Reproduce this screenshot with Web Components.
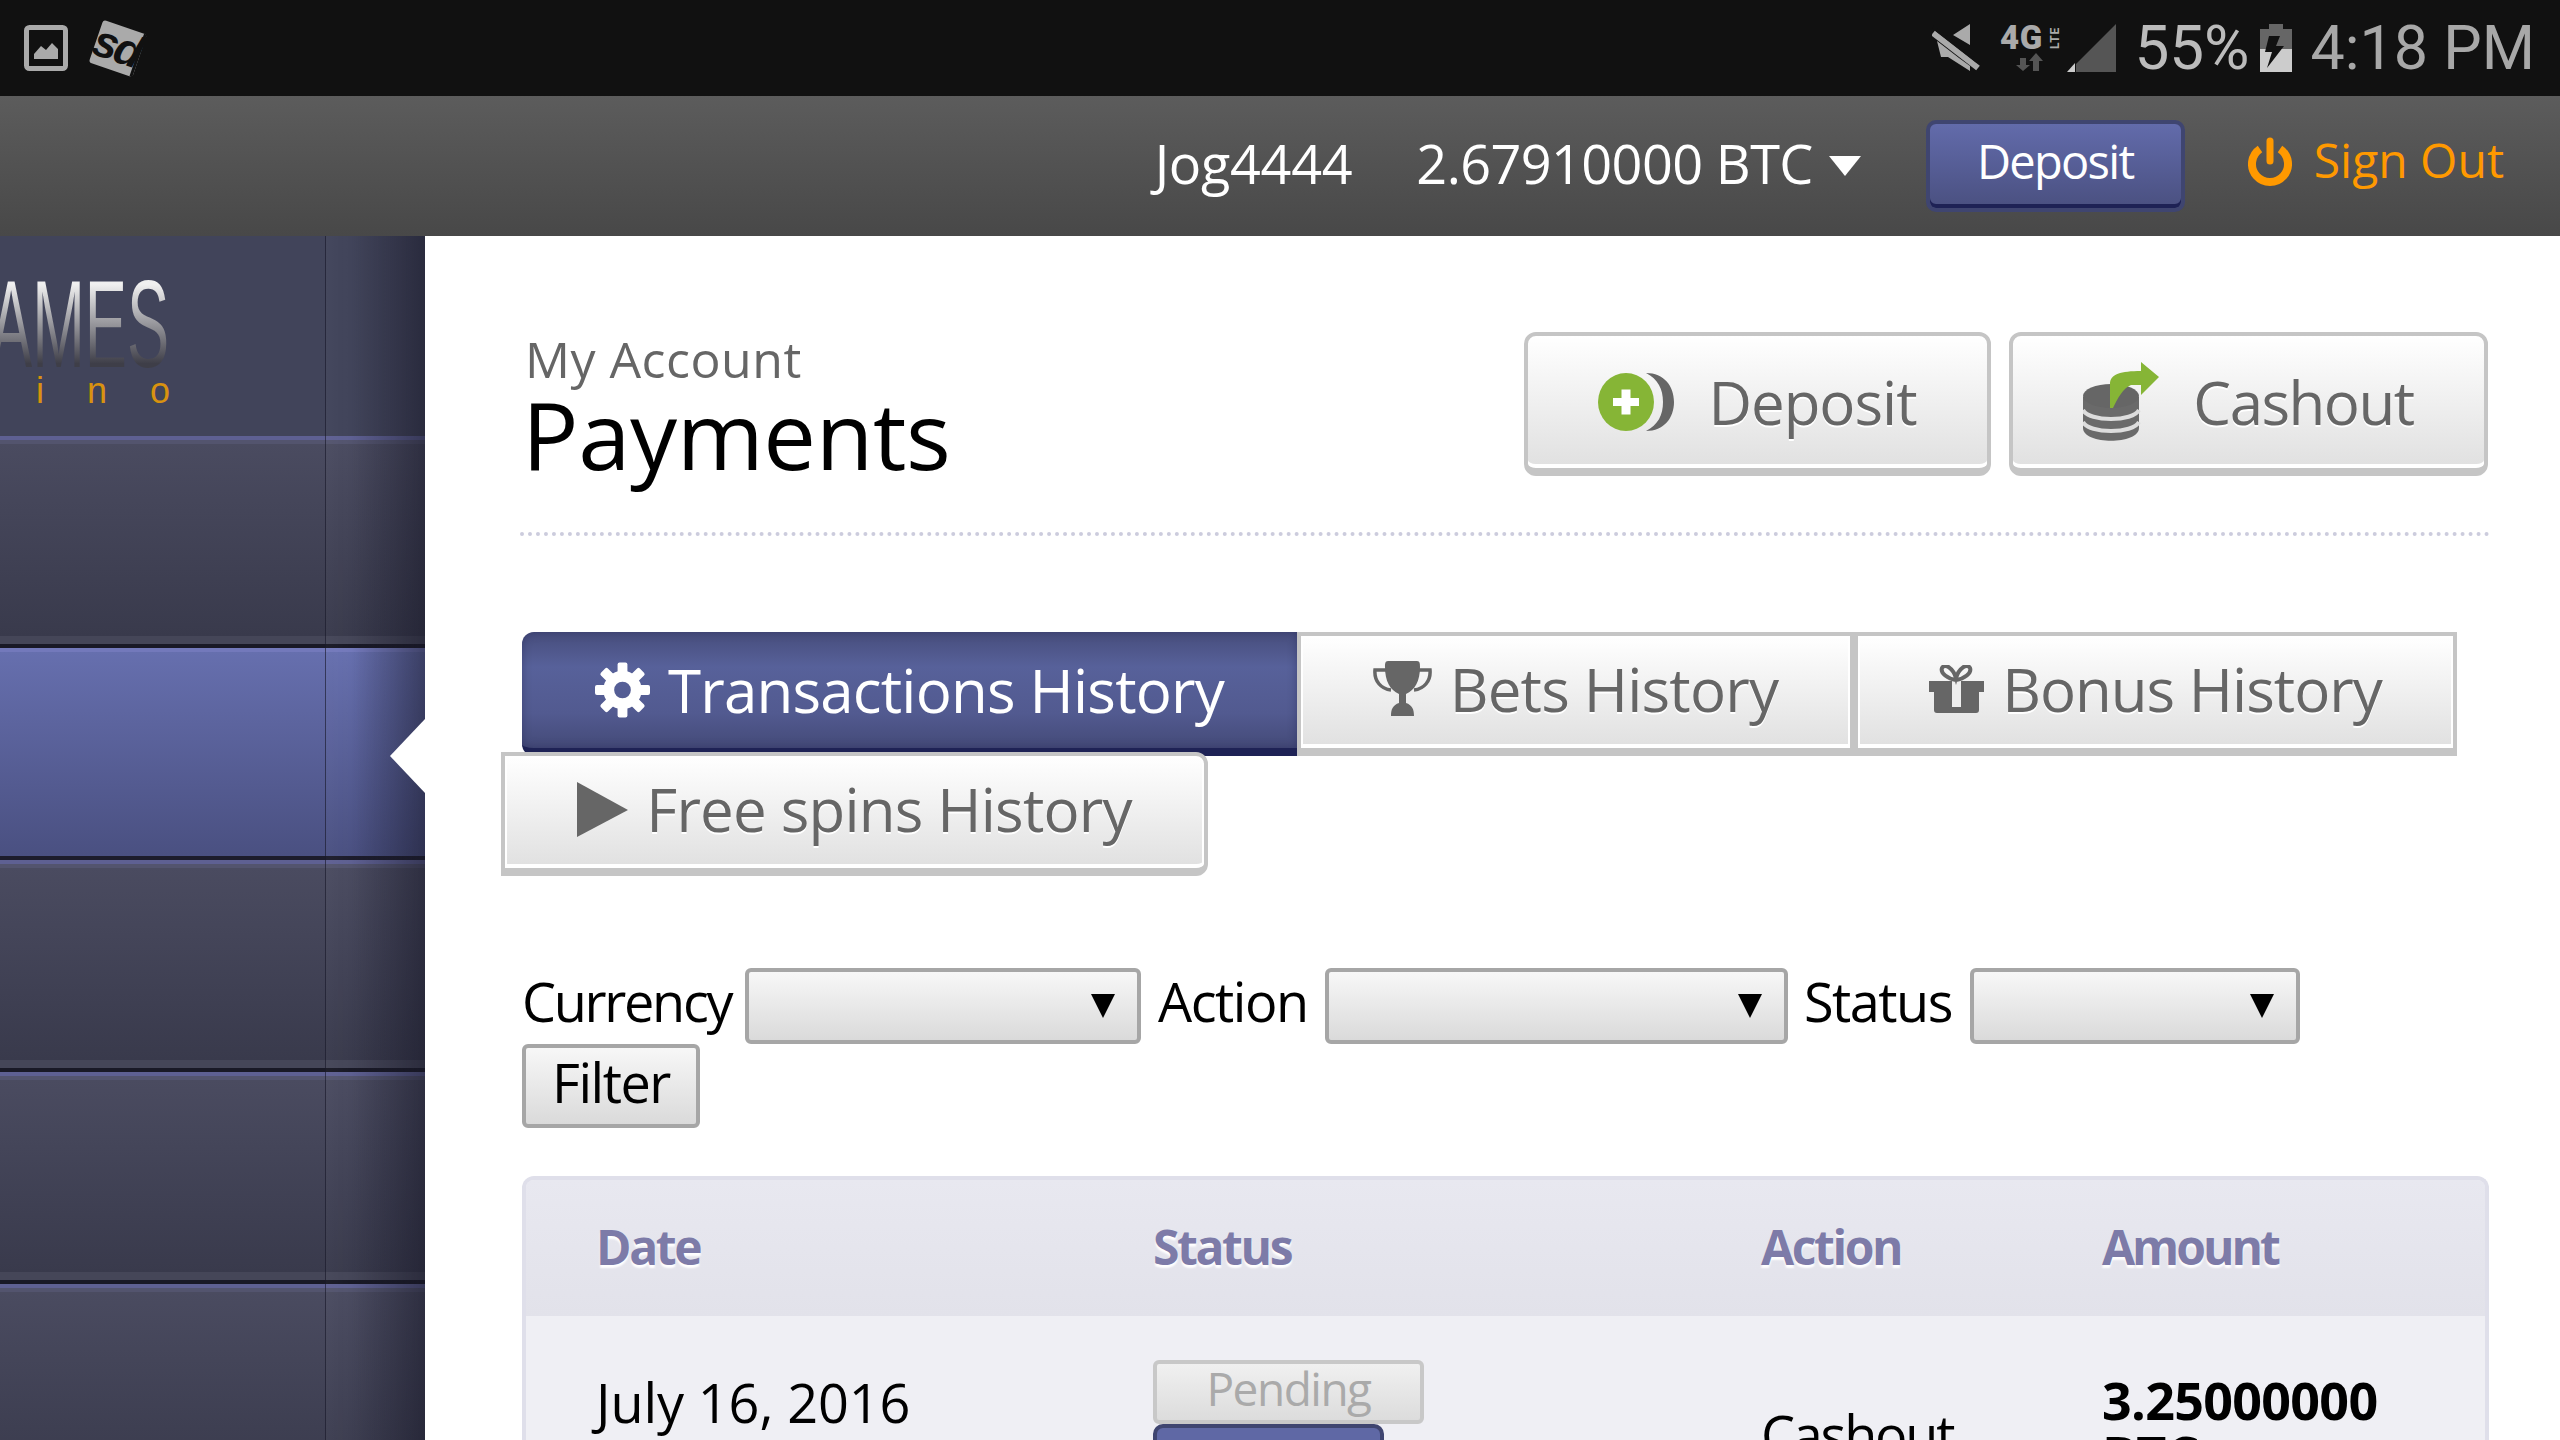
<!DOCTYPE html>
<html>
<head>
<meta charset="utf-8">
<title>Payments</title>
<style>
	html, body { margin: 0; height: 1440px; overflow: hidden; background: #fff; }
	body { font-family: "Open Sans", sans-serif; color: #000; }
	svg { display: block; }
</style>
</head>
<body>

<status-bar>
	<svg slot="left" width="44" height="46" viewBox="0 0 44 46">
		<rect x="2.5" y="2.5" width="39" height="41" rx="3" fill="none" stroke="#aaa" stroke-width="5"/>
		<path d="M10 34 V29 L17 21 L22 25 L28 18 L34 24 V34 Z" fill="#aaa"/>
	</svg>
	<svg slot="left" width="58" height="58" viewBox="0 0 58 58" overflow="visible">
		<g transform="rotate(19 29 29)">
			<rect x="6" y="7" width="46" height="45" rx="3" fill="#aaa"/>
			<rect x="49" y="7" width="3" height="45" fill="#111"/>
			<text x="4" y="43" font-family="Liberation Sans" font-weight="700" font-style="italic" font-size="45" letter-spacing="-3" fill="#111">sd</text>
		</g>
	</svg>

	<svg slot="right" width="48" height="48" viewBox="0 0 48 48">
		<path d="M38 0 V21 L21 11 Z M5 17 L27 34 L38 42 V47 L16 33 H9 Z" fill="#aaa"/>
		<path d="M1 9 L46 44" stroke="#aaa" stroke-width="6"/>
		<path d="M1 3 L46 38" stroke="#111" stroke-width="3"/>
	</svg>
	<svg slot="right" width="60" height="48" viewBox="0 0 60 48" overflow="visible" style="margin-left:20px">
		<text x="0" y="25" font-family="Roboto" font-weight="900" font-size="33" letter-spacing=".5" fill="#aaa">4G</text>
		<text transform="translate(59 25) rotate(-90)" font-family="Roboto" font-weight="700" font-size="12" letter-spacing="1" fill="#aaa">LTE</text>
		<path d="M14 36 H20 V43 H24 L17 49 L10 43 H14 Z" fill="#555" transform="translate(6 -2)"/>
		<path d="M33 47 H39 V37 H43 L36 29 L29 37 H33 Z" fill="#555"/>
	</svg>
	<svg slot="right" width="49" height="48" viewBox="0 0 49 48" style="margin-left:7px">
		<path d="M49 0 V48 H9 V40 Z" fill="#555"/>
		<path d="M0 48 L8 39 V48 Z" fill="#ccc"/>
	</svg>
	<span slot="right" class="pct">55%</span>
	<svg slot="right" width="32" height="48" viewBox="0 0 32 48" style="margin-left:10px">
		<path d="M9 0 H23 V5 H32 V25 H0 V5 H9 Z" fill="#666"/>
		<rect x="0" y="25" width="32" height="23" fill="#ccc"/>
		<path d="M20 12 H9 L5 28 H12 L7 44 L24 22 H16 Z" fill="#111"/>
	</svg>
	<span slot="right" class="time">4:18 PM</span>
</status-bar>

<top-bar></top-bar>

<div class="layout" style="display:flex;height:1204px;overflow:hidden">
	<side-nav></side-nav>
	<main-pane>
		<page-head>
			<action-button width="467">
				<svg slot="icon" width="76" height="58" viewBox="0 0 76 58">
					<path d="M48 0 C66 0 76 13 76 29 C76 45 66 58 48 58 C60 52 65 42 65 29 C65 16 60 6 48 0 Z" fill="#666"/>
					<ellipse cx="28" cy="29" rx="28" ry="29" fill="#86b536"/>
					<path d="M23.5 16.5 H32.5 V25 H41 V33 H32.5 V41.5 H23.5 V33 H15 V25 H23.5 Z" fill="#fff"/>
				</svg>
				Deposit
			</action-button>
			<action-button width="479" style="letter-spacing:-1.5px">
				<svg slot="icon" width="76" height="80" viewBox="0 0 76 80">
					<path d="M0 35 V66 C0 83 56 83 56 66 V35 Z" fill="#6a6a6a"/>
					<path d="M0 48 C6 60 50 60 56 48 M0 60 C6 72 50 72 56 60" fill="none" stroke="#ddd" stroke-width="4"/>
					<ellipse cx="28" cy="34" rx="28" ry="12" fill="#666"/>
					<path d="M58 0 L76 15 L58 33 V23 H48 C40 26 35 36 30 46 H27 V22 C27 12 38 9 58 9 Z" fill="#86b536"/>
				</svg>
				Cashout
			</action-button>
		</page-head>

		<tab-row>
			<tab-button active first width="775">
				<svg slot="icon" width="55" height="56" viewBox="-28 -28 56 56" fill="#fff">
					<circle r="14" fill="none" stroke="#fff" stroke-width="11"/>
					<rect x="-5" y="-28" width="10" height="12" rx="2"/>
					<rect x="-5" y="-28" width="10" height="12" rx="2" transform="rotate(45)"/>
					<rect x="-5" y="-28" width="10" height="12" rx="2" transform="rotate(90)"/>
					<rect x="-5" y="-28" width="10" height="12" rx="2" transform="rotate(135)"/>
					<rect x="-5" y="-28" width="10" height="12" rx="2" transform="rotate(180)"/>
					<rect x="-5" y="-28" width="10" height="12" rx="2" transform="rotate(225)"/>
					<rect x="-5" y="-28" width="10" height="12" rx="2" transform="rotate(270)"/>
					<rect x="-5" y="-28" width="10" height="12" rx="2" transform="rotate(315)"/>
				</svg>
				Transactions History
			</tab-button>
			<tab-button width="557">
				<svg slot="icon" width="59" height="56" viewBox="0 0 59 56">
					<path d="M15 0 H44 C47 0 47 3 47 6 C47 20 42 29 33 33 V42 C39 44 41 48 41 55 H18 C18 48 20 44 26 42 V33 C17 29 12 20 12 6 C12 3 12 0 15 0 Z" fill="#666"/>
					<path d="M13 9 H2 C1 20 8 28 18 29 M46 9 H57 C58 20 51 28 41 29" fill="none" stroke="#666" stroke-width="3.5"/>
				</svg>
				Bets History
			</tab-button>
			<tab-button width="603" style="letter-spacing:-1px">
				<svg slot="icon" width="55" height="48" viewBox="0 0 55 48">
					<path d="M0 16 H55 V27 H50 V45 C50 47 49 48 47 48 H8 C6 48 5 47 5 45 V27 H0 Z" fill="#666"/>
					<rect x="23" y="16" width="9" height="26" fill="#eee"/>
					<path d="M27 15 C19 14 11 8 13 3 C16 -2 24 3 27 13 C30 3 38 -2 41 3 C43 8 35 14 27 15 Z" fill="none" stroke="#666" stroke-width="4"/>
				</svg>
				Bonus History
			</tab-button>
		</tab-row>
		<tab-row second>
			<tab-button last width="707">
				<svg slot="icon" width="51" height="55" viewBox="0 0 51 55"><path d="M0 0 L51 28 L0 55 Z" fill="#666"/></svg>
				Free spins History
			</tab-button>
		</tab-row>

		<filter-bar></filter-bar>
		<tx-table></tx-table>
	</main-pane>
</div>

<script>
class StatusBar extends HTMLElement {
	connectedCallback(){
		const shadow = this.attachShadow({ mode: 'open' })
		shadow.innerHTML = `
		<style>
			:host { display: flex; justify-content: space-between; height: 96px; background: #111; font-family: Roboto, sans-serif; }
			.left { display: flex; gap: 21px; padding-left: 24px; align-items: center; }
			.right { display: flex; align-items: center; padding-right: 25px; }
			::slotted(.pct) { color: #bbb; font-size: 62px; margin-left: 18px; line-height: 96px; }
			::slotted(.time) { color: #a8a8a8; font-size: 61px; margin-left: 19px; line-height: 96px; }
		</style>
		<div class="left"><slot name="left"></slot></div>
		<div class="right"><slot name="right"></slot></div>`
	}
}

class TopBar extends HTMLElement {
	connectedCallback(){
		const shadow = this.attachShadow({ mode: 'open' })
		shadow.innerHTML = `
		<style>
			:host { display: flex; justify-content: flex-end; align-items: center; height: 140px; padding-right: 56px; background: linear-gradient(#5c5c5c, #484848); color: #fff; }
			.name, .balance { font-size: 54px; padding-bottom: 6px; }
			.name { letter-spacing: -.3px; }
			.balance { margin-left: 64px; letter-spacing: -.6px; }
			.caret { width: 0; height: 0; border: 16px solid transparent; border-top: 20px solid #fff; border-bottom: 0; margin: 0 0 0 16px; }
			.deposit { box-sizing: border-box; width: 259px; height: 92px; margin-left: 65px; border: 4px solid #3f4570; border-radius: 10px; background: linear-gradient(#626bab, #4a5080); box-shadow: inset 0 -4px 0 #1e2255; display: flex; align-items: center; justify-content: center; font-size: 47px; letter-spacing: -1.7px; padding-bottom: 10px; }
			.out { display: flex; align-items: center; margin-left: 63px; color: #f90; font-size: 48px; gap: 22px; padding-bottom: 8px; }
			.out span { padding-bottom: 6px; }
		</style>
		<span class="name">Jog4444</span>
		<span class="balance">2.67910000 BTC</span>
		<span class="caret"></span>
		<span class="deposit">Deposit</span>
		<span class="out">
			<svg width="44" height="50" viewBox="0 0 44 50" style="display:block">
				<path d="M12 12 A18 18 0 1 0 32 12" fill="none" stroke="#f90" stroke-width="8"/>
				<path d="M22 4 V24" stroke="#f90" stroke-width="7" stroke-linecap="round"/>
			</svg>
			<span>Sign Out</span>
		</span>`
	}
}

class SideNav extends HTMLElement {
	connectedCallback(){
		const shadow = this.attachShadow({ mode: 'open' })
		shadow.innerHTML = `
		<style>
			:host { display: block; position: relative; flex: 0 0 425px; height: 1204px; overflow: hidden; background: #41445a; }
			.logo { height: 156px; padding-top: 44px; overflow: hidden; }
			.games { font: 124px/88px "Liberation Sans", sans-serif; height: 88px; margin-left: -10px; width: 360px; transform: scaleX(.51); transform-origin: left top; background: linear-gradient(#f0f0f0 5%, #3e3e48 95%); -webkit-background-clip: text; background-clip: text; color: transparent; }
			.casino { display: flex; margin-top: 9px; padding-left: 36px; gap: 43px; font: 36px/28px "Liberation Sans", sans-serif; color: #d8920f; }
			.shade { position: absolute; inset: 0; left: 325px; border-left: 1px solid rgba(30,30,50,.2); background: linear-gradient(to right, rgba(255,255,255,.02), rgba(255,255,255,0) 25px, rgba(22,22,38,.55) 100px); }
		</style>
		<div class="logo">
			<div class="games">AMES</div>
			<div class="casino"><span>i</span><span>n</span><span>o</span></div>
		</div>
		<nav-row></nav-row>
		<nav-row active></nav-row>
		<nav-row></nav-row>
		<nav-row></nav-row>
		<nav-row></nav-row>
		<div class="shade"></div>`
	}
}

class NavRow extends HTMLElement {
	connectedCallback(){
		const shadow = this.attachShadow({ mode: 'open' })
		shadow.innerHTML = `
		<style>
			:host { display: block; box-sizing: border-box; position: relative; height: 212px; border-top: 4px solid #5e6092; border-bottom: 4px solid #191926; background: linear-gradient(#53546e 0, #53546e 4px, #4a4b60 4px, #393a4c calc(100% - 8px), #454658 calc(100% - 8px)); }
			:host([active]) { border-top-color: #7379bb; border-bottom-color: #1c1c2c; background: linear-gradient(#666fae, #4a5081); }
			/* no z-index on the host, so the arrow stays above the sidebar shade */
			.tip { display: none; position: absolute; z-index: 2; right: 0; top: 67px; width: 0; height: 0; border: 37px solid transparent; border-right: 35px solid #fff; border-left: 0; }
			:host([active]) .tip { display: block; }
		</style>
		<div class="tip"></div>`
	}
}

class MainPane extends HTMLElement {
	connectedCallback(){
		const shadow = this.attachShadow({ mode: 'open' })
		shadow.innerHTML = `
		<style>
			:host { display: block; flex: 1; min-width: 0; box-sizing: border-box; height: 1204px; padding: 96px 71px 0 97px; background: #fff; }
		</style>
		<slot></slot>`
	}
}

class PageHead extends HTMLElement {
	connectedCallback(){
		const shadow = this.attachShadow({ mode: 'open' })
		shadow.innerHTML = `
		<style>
			:host { display: flex; justify-content: space-between; height: 200px; margin: 0 -2px 96px -2px; padding-right: 3px; border-bottom: 4px dotted #ccccdd; }
			.titles { padding-left: 2px; }
			.sub { font-size: 50px; line-height: 50px; color: #666; letter-spacing: .5px; padding-left: 3px; margin-top: 2px; }
			h1 { margin: 0; font-weight: 400; font-size: 94px; line-height: 100px; letter-spacing: -.4px; }
			.buttons { display: flex; gap: 18px; align-items: flex-start; }
		</style>
		<div class="titles">
			<div class="sub">My Account</div>
			<h1>Payments</h1>
		</div>
		<div class="buttons"><slot></slot></div>`
	}
}

class ActionButton extends HTMLElement {
	connectedCallback(){
		const shadow = this.attachShadow({ mode: 'open' })
		shadow.innerHTML = `
		<style>
			:host { display: flex; align-items: center; justify-content: center; gap: 34px; box-sizing: border-box; width: ${this.getAttribute('width')}px; height: 144px; border: 4px solid #c5c5c5; border-bottom-width: 8px; border-radius: 12px; background: linear-gradient(#fff, #e0e0e0); box-shadow: inset 0 -4px 0 #fff; color: #666; font-size: 60px; letter-spacing: -1px; text-shadow: 0 2px 0 #fff; }
		</style>
		<slot name="icon"></slot>
		<slot></slot>`
	}
}

class TabRow extends HTMLElement {
	connectedCallback(){
		const shadow = this.attachShadow({ mode: 'open' })
		shadow.innerHTML = `
		<style>
			:host { display: flex; position: relative; }
			:host([second]) { margin: -4px 0 0 -21px; z-index: 1; }
		</style>
		<slot></slot>`
	}
}

class TabButton extends HTMLElement {
	connectedCallback(){
		const shadow = this.attachShadow({ mode: 'open' })
		shadow.innerHTML = `
		<style>
			:host { display: flex; align-items: center; justify-content: center; gap: 18px; box-sizing: border-box; width: ${this.getAttribute('width')}px; height: 124px; border: 4px solid #c5c5c5; border-bottom-width: 8px; background: linear-gradient(#fff, #e0e0e0); box-shadow: inset 0 0 0 2px #fff, inset 0 -4px 0 #fff; color: #666; font-size: 60px; letter-spacing: -.8px; text-shadow: 0 2px 0 #fff; padding-bottom: 6px; }
			:host([active]) { border: 0; border-bottom: 8px solid #1e2255; color: #fff; text-shadow: none; box-shadow: inset 0 0 8px rgba(40,44,90,.5); background: linear-gradient(#474d7c, #57619a 30%, #525a90 70%, #444a78); padding-bottom: 0; }
			:host([first]) { border-radius: 12px 0 0 12px; }
			:host([last]) { border-radius: 0 12px 12px 0; }
		</style>
		<slot name="icon"></slot>
		<slot></slot>`
	}
}

class FilterSelect extends HTMLElement {
	connectedCallback(){
		const shadow = this.attachShadow({ mode: 'open' })
		shadow.innerHTML = `
		<style>
			:host { display: flex; align-items: center; justify-content: flex-end; box-sizing: border-box; width: ${this.getAttribute('width')}px; height: 76px; padding-right: 22px; border: 4px solid #a6a6a6; border-radius: 6px; background: linear-gradient(#f7f7f7, #dadada); }
			i { width: 0; height: 0; border: 12px solid transparent; border-top: 24px solid #000; border-bottom: 0; }
		</style>
		<i></i>`
	}
}

class FilterBar extends HTMLElement {
	connectedCallback(){
		const shadow = this.attachShadow({ mode: 'open' })
		shadow.innerHTML = `
		<style>
			:host { display: block; margin-top: 92px; font-size: 54px; letter-spacing: -1.5px; }
			.line { display: flex; align-items: center; height: 76px; }
			.line span { padding-bottom: 10px; }
			.filter { display: flex; align-items: center; justify-content: center; box-sizing: border-box; width: 178px; height: 84px; padding-bottom: 8px; border: 4px solid #a6a6a6; border-radius: 6px; background: linear-gradient(#f7f7f7, #dadada); }
		</style>
		<div class="line">
			<span style="width:223px;letter-spacing:-2.3px">Currency</span>
			<filter-select width="396"></filter-select>
			<span style="width:167px;margin-left:17px">Action</span>
			<filter-select width="463"></filter-select>
			<span style="width:166px;margin-left:16px">Status</span>
			<filter-select width="330"></filter-select>
		</div>
		<div class="filter">Filter</div>`
	}
}

class TxTable extends HTMLElement {
	connectedCallback(){
		const shadow = this.attachShadow({ mode: 'open' })
		shadow.innerHTML = `
		<style>
			:host { display: block; box-sizing: border-box; width: 1967px; height: 264px; overflow: hidden; margin-top: 48px; border: 4px solid #dfdfea; border-bottom: 0; border-radius: 12px 12px 0 0; background: #efeff4; }
			.head, .row { display: grid; grid-template-columns: 555px 608px 341px 1fr; padding-left: 72px; }
			.head { height: 136px; align-items: center; background: linear-gradient(#e8e8f0, #e2e2ea); color: #7d7ba8; font-size: 48px; font-weight: 700; letter-spacing: -2.4px; text-shadow: 0 3px 2px #fff; }
			.head span { padding-bottom: 4px; }
			.head span:first-child { margin-left: -2px; }
			.head span:last-child { letter-spacing: -3px; }
			.row { font-size: 54px; line-height: 64px; }
			.date { padding-top: 54px; letter-spacing: -.1px; margin-left: -2px; }
			.status { padding-top: 44px; }
			.action { padding-top: 86px; letter-spacing: -2.2px; }
			.amount { padding-top: 57px; font-size: 52px; line-height: 54px; font-weight: 700; letter-spacing: -.7px; }
			.pending { box-sizing: border-box; width: 271px; height: 64px; border: 4px solid #c8c8c8; border-radius: 6px; background: linear-gradient(#f0f0f0, #dcdcdc); color: #aaa; font-size: 46px; line-height: 48px; letter-spacing: -1.5px; text-align: center; }
			.blue { box-sizing: border-box; width: 231px; height: 56px; border: 4px solid #3f4570; border-radius: 10px; background: #5f68a5; }
		</style>
		<div class="head"><span>Date</span><span>Status</span><span>Action</span><span>Amount</span></div>
		<div class="row">
			<div class="date">July 16, 2016</div>
			<div class="status"><div class="pending">Pending</div><div class="blue"></div></div>
			<div class="action">Cashout</div>
			<div class="amount">3.25000000<br>BTC</div>
		</div>`
	}
}

customElements.define('status-bar', StatusBar)
customElements.define('top-bar', TopBar)
customElements.define('nav-row', NavRow)
customElements.define('side-nav', SideNav)
customElements.define('main-pane', MainPane)
customElements.define('page-head', PageHead)
customElements.define('action-button', ActionButton)
customElements.define('tab-row', TabRow)
customElements.define('tab-button', TabButton)
customElements.define('filter-select', FilterSelect)
customElements.define('filter-bar', FilterBar)
customElements.define('tx-table', TxTable)
</script>
</body>
</html>
